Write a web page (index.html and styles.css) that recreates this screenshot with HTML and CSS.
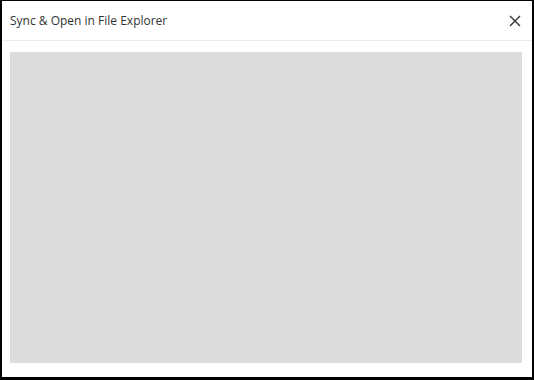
FILE: index.html
```html
<!DOCTYPE html>
<html lang="en">
  <head>
    <meta charset="UTF-8" />
    <title>Sync &amp; Open in File Explorer</title>
    <link rel="stylesheet" href="styles.css">
  </head>
  <body>
    <div class="dialog">
      <div class="dialog-header">
        <span class="dialog-title">Sync &amp; Open in File Explorer</span>
        <button class="close-btn" aria-label="Close">
          <svg width="12" height="12" viewBox="0 0 12 12">
            <path d="M1 1L11 11M11 1L1 11" stroke="#333" stroke-width="1.4" fill="none" />
          </svg>
        </button>
      </div>
      <div class="dialog-body">
        <div class="preview"></div>
      </div>
    </div>
  </body>
</html>
```

FILE: styles.css
```css
html,
body {
  margin: 0;
  height: 100%;
  background: #000;
}
body {
  font-family: "Open Sans", "Noto Sans", sans-serif;
  padding: 1px 2px 3px 2px;
  box-sizing: border-box;
}
.dialog {
  background: #fff;
  height: 100%;
  display: flex;
  flex-direction: column;
}
.dialog-header {
  height: 39px;
  border-bottom: 1px solid #ececec;
  display: flex;
  align-items: center;
  justify-content: space-between;
  padding: 0 11px 0 8px;
}
.dialog-title {
  font-size: 12px;
  color: #333;
}
.close-btn {
  background: none;
  border: none;
  padding: 0;
  width: 12px;
  height: 12px;
  display: flex;
  cursor: pointer;
}
.dialog-body {
  flex: 1;
  padding: 11px 10px 14px 8px;
  display: flex;
}
.preview {
  flex: 1;
  background: #dcdcdc;
}
```
